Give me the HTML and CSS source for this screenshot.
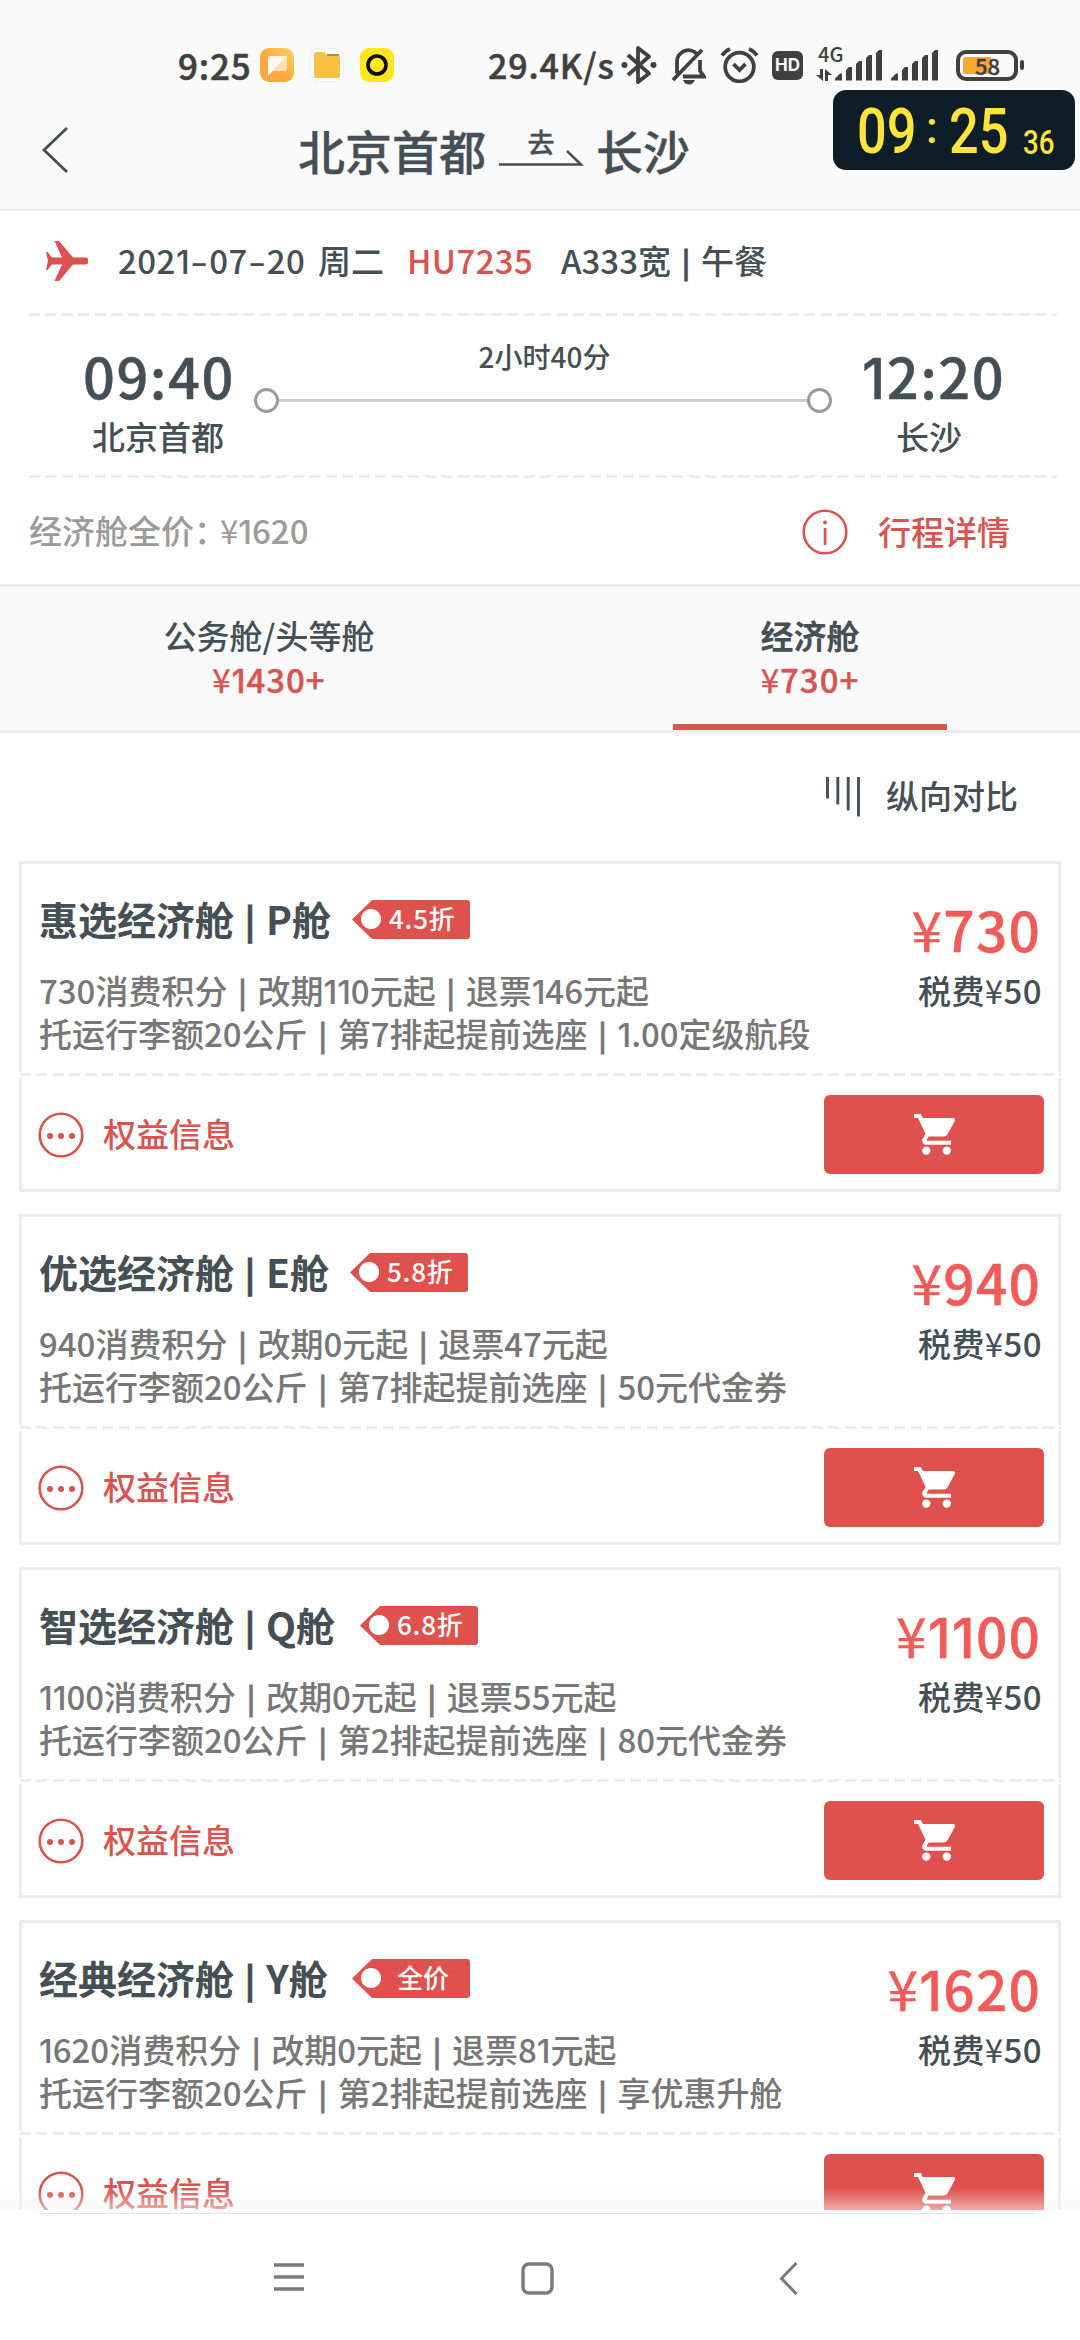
FILE: index.html
```html
<!DOCTYPE html>
<html lang="zh-CN">
<head>
<meta charset="utf-8">
<title>北京首都 - 长沙</title>
<link rel="stylesheet" href="styles.css">
</head>
<body>
<svg class="defs" width="0" height="0" aria-hidden="true">
  <symbol id="cart" viewBox="0 0 41 41">
    <path d="M0 0h6.8l2 4.1H39a2 2 0 0 1 1.8 3l-7.4 13.3a4.1 4.1 0 0 1-3.6 2.1H14.6l-1.9 3.4c-.2.5 0 .8.5.8H37v4.1H12.3a4.1 4.1 0 0 1-3.6-6.1l2.8-5L4.1 4.1H0z"/>
    <circle cx="12.3" cy="36.6" r="4.2"/><circle cx="32.8" cy="36.6" r="4.2"/>
  </symbol>
  <symbol id="more" viewBox="0 0 46 46">
    <circle cx="23" cy="23" r="21.3" fill="none" stroke="currentColor" stroke-width="2.6"/>
    <circle cx="12" cy="24" r="3"/><circle cx="23" cy="24" r="3"/><circle cx="34" cy="24" r="3"/>
  </symbol>
  <symbol id="signal" viewBox="0 0 48 31">
    <path d="M0 30.500v-2l5-5h2v7zM11 30.500V20l3-3h3v13.500zM21 30.500V14l3-3h3v19.500zM31 30.500V8l3-3h3v25.500zM41 30.500V3l3-3h3v30.500z"/>
  </symbol>
</svg>
<header class="top">
  <div class="status">
    <span class="st-time">9:25</span>
    <svg class="app app1" viewBox="0 0 34 34"><defs><linearGradient id="og" x1="0" y1="1" x2="1" y2="0"><stop offset=".4" stop-color="#ffa640"/><stop offset="1" stop-color="#ffd155"/></linearGradient></defs><rect width="34" height="34" rx="9" fill="url(#og)"/><path d="M27 8v13a2 2 0 0 1-2 2H13z" fill="#ffe0b4"/><path d="M8 10a2 2 0 0 1 2-2h17L8 28z" fill="#fffaf0"/></svg>
    <svg class="app app2" viewBox="0 0 34 34"><rect x=".5" y=".5" width="33" height="33" rx="8" fill="#fff" stroke="#eee"/><path d="M17 6h12v3H17z" fill="#b98a48"/><path d="M4 6q0-2 2-2h9l2 4h11q2 0 2 2v18q0 2-2 2H6q-2 0-2-2z" fill="#f8c045"/></svg>
    <svg class="app app3" viewBox="0 0 34 34"><rect width="34" height="34" rx="9" fill="#ffe51c"/><circle cx="17" cy="17" r="9" fill="none" stroke="#0a0a0a" stroke-width="3.600"/></svg>
    <span class="st-speed">29.4K/s</span>
    <svg class="bt" viewBox="0 0 36 40"><path d="M7 10l21 18.500-11 8.500V3l11 8.500L7 30" fill="none" stroke="currentColor" stroke-width="3.800" stroke-linejoin="round"/><circle cx="3.500" cy="20" r="3"/><circle cx="32.500" cy="20" r="3"/></svg>
    <svg class="bell" viewBox="0 0 35 38"><path d="M6 26.500V15a11.500 11.500 0 0 1 20-8M29 13v11l4 5.500H12M31 3L2 33" fill="none" stroke="currentColor" stroke-width="3.800"/><path d="M12 33h12q-2 4.500-6 4.500T12 33z"/></svg>
    <svg class="alarm" viewBox="0 0 39 36"><circle cx="19.500" cy="20" r="14.300" fill="none" stroke="currentColor" stroke-width="3.800"/><path d="M13.500 17l6 6 6-6M2 8.500Q5 4 10 2M37 8.500Q34 4 29 2" fill="none" stroke="currentColor" stroke-width="3.800"/></svg>
    <span class="hd">HD</span>
    <span class="net"><span class="gen">4G</span><svg class="updown" viewBox="0 0 16 12"><path d="M4 0h3v12L0 6h4zM9 12V0l7 6h-4v6z"/></svg></span>
    <svg class="sig sig1"><use href="#signal"/></svg>
    <svg class="sig sig2"><use href="#signal"/></svg>
    <span class="battery"><span class="level"></span><span class="pct">58</span></span><span class="nub"></span>
  </div>
  <div class="titlebar">
    <svg class="back" viewBox="0 0 28 46"><path d="M26 1L3 23l23 22" fill="none" stroke="currentColor" stroke-width="2.800"/></svg>
    <span class="from">北京首都</span>
    <span class="way"><span>去</span><svg viewBox="0 0 86 18"><path d="M1 15.500H83L69 2" fill="none" stroke="currentColor" stroke-width="2.500"/></svg></span>
    <span class="to">长沙</span>
  </div>
  <div class="clock"><span class="big">09</span><span class="colon">:</span><span class="big">25</span><span class="small">36</span></div>
</header>

<main class="content">
  <section class="flight">
    <svg class="plane" viewBox="0 0 42 40"><path d="M8.500 0h4.500L27 16.500h12a3.300 3.300 0 0 1 0 7H27L13 40H8.500L16 23.500H6L1.500 29H0l2-9-2-9h1.500L6 16.500h10z"/></svg>
    <span class="date">202<i>1</i><span class="hy">-</span>07<span class="hy">-</span>20</span><span class="week">周二</span><span class="no">HU7235</span><span class="craft">A333宽<span class="sep">|</span>午餐</span>
  </section>
  <div class="dash"></div>
  <section class="times">
    <div class="point"><b>09:40</b><span>北京首都</span></div>
    <div class="duration"><span>2小时40分</span><div class="track"></div></div>
    <div class="point arr"><b><i>1</i>2:20</b><span>长沙</span></div>
  </section>
  <div class="dash"></div>
  <section class="full">
    <span class="fullprice">经济舱全价：<em>¥</em><i>1</i>620</span>
    <svg class="info" viewBox="0 0 46 46"><circle cx="23" cy="23" r="21.300" fill="none" stroke="currentColor" stroke-width="2.600"/><circle cx="23" cy="13.500" r="1.900"/><path d="M21.700 19h2.700v17h-2.700z"/></svg>
    <span class="detail">行程详情</span>
  </section>
  <nav class="tabs">
    <div class="tab"><span>公务舱/头等舱</span><span class="tp"><em>¥</em><i>1</i>430+</span></div>
    <div class="tab on"><span>经济舱</span><span class="tp"><em>¥</em>730+</span></div>
  </nav>
  <div class="compare">
    <svg viewBox="0 0 34 40"><path d="M1.500 0v21.500M11.800 0v27.500M22.200 0v33.500M32.500 0v39.500" stroke="currentColor" stroke-width="2.900"/></svg>
    <span>纵向对比</span>
  </div>

  <article class="card">
    <div class="upper">
      <div class="name"><h2 class="n1">惠选经济舱<span class="sep">|</span>P舱</h2><span class="tag">4.5折</span></div>
      <div class="price"><em>¥</em>730</div>
      <div class="rules"><p>730消费积分<span class="sep">|</span>改期<i>11</i>0元起<span class="sep">|</span>退票<i>1</i>46元起</p><p>托运行李额20公斤<span class="sep">|</span>第7排起提前选座<span class="sep">|</span><i>1</i>.00定级航段</p></div>
      <div class="tax">税费<em>¥</em>50</div>
    </div>
    <div class="perf"></div>
    <div class="lower"><svg class="more"><use href="#more"/></svg><span class="rights">权益信息</span><span class="buy"><svg><use href="#cart"/></svg></span></div>
  </article>

  <article class="card">
    <div class="upper">
      <div class="name"><h2 class="n2">优选经济舱<span class="sep">|</span>E舱</h2><span class="tag">5.8折</span></div>
      <div class="price"><em>¥</em>940</div>
      <div class="rules"><p>940消费积分<span class="sep">|</span>改期0元起<span class="sep">|</span>退票47元起</p><p>托运行李额20公斤<span class="sep">|</span>第7排起提前选座<span class="sep">|</span>50元代金券</p></div>
      <div class="tax">税费<em>¥</em>50</div>
    </div>
    <div class="perf"></div>
    <div class="lower"><svg class="more"><use href="#more"/></svg><span class="rights">权益信息</span><span class="buy"><svg><use href="#cart"/></svg></span></div>
  </article>

  <article class="card">
    <div class="upper">
      <div class="name"><h2 class="n3">智选经济舱<span class="sep">|</span>Q舱</h2><span class="tag">6.8折</span></div>
      <div class="price"><em>¥</em><i>11</i>00</div>
      <div class="rules"><p><i>11</i>00消费积分<span class="sep">|</span>改期0元起<span class="sep">|</span>退票55元起</p><p>托运行李额20公斤<span class="sep">|</span>第2排起提前选座<span class="sep">|</span>80元代金券</p></div>
      <div class="tax">税费<em>¥</em>50</div>
    </div>
    <div class="perf"></div>
    <div class="lower"><svg class="more"><use href="#more"/></svg><span class="rights">权益信息</span><span class="buy"><svg><use href="#cart"/></svg></span></div>
  </article>

  <article class="card">
    <div class="upper">
      <div class="name"><h2 class="n4">经典经济舱<span class="sep">|</span>Y舱</h2><span class="tag full-fare">全价</span></div>
      <div class="price"><em>¥</em><i>1</i>620</div>
      <div class="rules"><p><i>1</i>620消费积分<span class="sep">|</span>改期0元起<span class="sep">|</span>退票8<i>1</i>元起</p><p>托运行李额20公斤<span class="sep">|</span>第2排起提前选座<span class="sep">|</span>享优惠升舱</p></div>
      <div class="tax">税费<em>¥</em>50</div>
    </div>
    <div class="perf"></div>
    <div class="lower"><svg class="more"><use href="#more"/></svg><span class="rights">权益信息</span><span class="buy"><svg><use href="#cart"/></svg></span></div>
  </article>
  <div class="fade"></div>
</main>

<footer class="navbar">
  <svg class="nmenu" viewBox="0 0 30 30"><path d="M0 3h30M0 15h30M0 27h30" stroke="currentColor" stroke-width="3.400"/></svg>
  <svg class="nhome" viewBox="0 0 33 33"><rect x="2" y="2" width="29" height="29" rx="6" fill="none" stroke="currentColor" stroke-width="3.400"/></svg>
  <svg class="nback" viewBox="0 0 19 33"><path d="M17.500 1L2.500 16.500l15 15.500" fill="none" stroke="currentColor" stroke-width="3"/></svg>
</footer>
</body>
</html>
```
FILE: styles.css
```css
*, *::before, *::after { box-sizing: border-box; }
html, body { margin: 0; }
body {
  width: 1080px; height: 2340px; overflow: hidden;
  display: flex; flex-direction: column;
  background: #fefefe; color: #454f56;
  font: 500 33px/1 "Noto Sans CJK SC", sans-serif;
  white-space: nowrap;
}
svg { display: block; fill: currentColor; flex: none; }
.defs { position: absolute; }
em, i { font-style: normal; }
em { font-weight: 400; }
/* the figure 1 is narrow and has no foot */
i { font-family: Inter, sans-serif; line-height: 1; }
span { flex: none; }

.top { position: relative; height: 211px; flex: none; background: #fafafa; border-bottom: 2px solid #ececec; }
.status { display: flex; align-items: flex-start; height: 90px; padding: 45px 0 0 178px; color: #404040; line-height: 40px; }
.st-time { width: 82px; font-size: 35px; letter-spacing: .8px; -webkit-text-stroke: .5px; }
.app { width: 34px; height: 34px; margin-top: 3px; }
.app2, .app3 { margin-left: 16px; }
.st-speed { width: 132px; margin-left: 94px; font-size: 34px; letter-spacing: .9px; -webkit-text-stroke: .5px; }
.bt { width: 36px; height: 40px; margin-left: 1px; margin-right: -1px; }
.bell { width: 35px; height: 38px; margin: 2px 0 0 15px; }
.alarm { width: 39px; height: 36px; margin: 2px 0 0 14px; }
.hd { width: 31px; height: 29px; margin: 6px 0 0 13px; border-radius: 6px; background: #404040; color: #fafafa; font: 700 17px/29px Inter, sans-serif; text-align: center; }
.net { width: 30px; margin-left: 13px; }
.gen { display: block; height: 24px; padding-left: 2px; font-size: 20px; line-height: 17px; }
.updown { width: 16px; height: 12px; }
.sig { width: 48px; height: 31px; margin-top: 5px; }
.sig1 { margin-left: -11px; }
.sig2 { margin-left: 8px; }
.battery { display: flex; align-items: center; width: 62px; height: 31px; margin: 5px 0 0 17px; padding: 2px 3px; border: 4px solid #404040; border-radius: 10px; }
.level { width: 28px; height: 17px; border-radius: 3px 0 0 3px; background: #f5ab31; }
.pct { margin-left: -16px; font-size: 22px; line-height: 12px; margin-top: -2px; -webkit-text-stroke: .4px; }
.nub { width: 4px; height: 10px; margin: 15px 0 0 2px; border-radius: 2px; background: #404040; }

.titlebar { display: flex; align-items: center; height: 119px; padding-left: 41px; font-size: 47px; line-height: 60px; -webkit-text-stroke: .3px; }
.back { width: 28px; height: 46px; margin-top: 1px; }
.from { width: 200px; margin-left: 229px; }
.way { width: 86px; margin-right: 12px; font-size: 27px; }
.way span { display: block; height: 24px; line-height: 20px; text-align: center; }
.way svg { width: 86px; height: 18px; margin-top: -7px; }
.clock {
  position: absolute; left: 833px; top: 90px; width: 242px; height: 80px;
  display: flex; border-radius: 13px; background: #0f1d29; color: #ffe43c;
  padding-left: 24px; font: 500 63px/83px Roboto, sans-serif;
}
.big { width: 76px; transform: scaleX(.83); transform-origin: 0 50%; }
.colon { width: 17px; margin-left: -7px; margin-right: 6px; font-size: 44px; line-height: 77px; }
.small { font-size: 33px; line-height: 105px; margin-left: -2px; transform: scaleX(.84); transform-origin: 0 50%; }

.content { position: relative; height: 1999px; flex: none; overflow: hidden; }
.flight { display: flex; align-items: center; height: 101px; padding: 0 0 3px 46px; line-height: 40px; }
.plane { width: 42px; height: 40px; margin: 1px 30px 0 0; color: #df514c; }
.date { width: 200px; letter-spacing: .5px; }
.hy { display: inline-block; width: 19px; text-align: center; transform: scaleX(1.5); }
.week { width: 89px; }
.no { width: 154px; color: #d9534f; letter-spacing: .4px; }
.sep { display: inline-block; width: 30px; text-align: center; font-size: .86em; line-height: 1; position: relative; top: -1px; -webkit-text-stroke: 1.2px; }
.dash, .perf {
  height: 4px; background: repeating-linear-gradient(90deg, #ececec 0 11px, transparent 11px 16.500px);
}
.dash { margin: 1px 23px 0 29px; height: 3px; }
.times { display: flex; height: 158px; padding: 24px 0 0 83px; }
.point { width: 150px; text-align: center; }
.point b { display: block; height: 76px; font-size: 56px; font-weight: 500; line-height: 69px; letter-spacing: 1.5px; -webkit-text-stroke: .4px; }
.point span { display: block; line-height: 40px; }
.arr { width: 140px; margin-left: 27px; }
.arr b { padding-left: 3px; }
.duration { width: 578px; margin-left: 21px; text-align: center; font-size: 28px; line-height: 34px; }
.duration span { display: block; padding-left: 3px; margin-top: -1px; }
.track {
  display: flex; align-items: center; justify-content: space-between; height: 26px; margin-top: 14px;
  background: linear-gradient(#ccc, #ccc) 24px 12px / 529px 3px no-repeat;
}
.track::before, .track::after { content: ""; flex: none; width: 25px; height: 25px; border: 3px solid #9b9b9b; border-radius: 50%; }
.full { display: flex; align-items: center; height: 106px; padding: 0 0 0 29px; color: #d9534f; }
.fullprice { width: 773px; color: #9b9b9b; }
.fullprice em { margin-left: -7px; }
.info { width: 46px; height: 46px; margin: 1px 29px 0 0; }
.detail { padding-left: 1px; }
.tabs { display: flex; height: 149px; border: solid #ececec; border-width: 3px 0; background: #fafafa; }
.tab { width: 538px; padding-top: 26px; text-align: center; line-height: 44px; }
.tab span { display: block; }
.tab .tp { color: #d9534f; letter-spacing: 1px; -webkit-text-stroke: .4px; }
.on { width: 274px; margin-left: 135px; border-bottom: 6px solid #df514c; font-weight: 700; }
.on .tp { font-weight: 500; }
.compare { display: flex; height: 128px; padding: 44px 0 0 826px; line-height: 36px; }
.compare svg { width: 34px; height: 40px; margin-right: 26px; }

.card { width: 1042px; height: 331px; margin: 0 0 22px 19px; }
.upper { display: grid; grid-template-columns: 1fr auto; align-content: start; height: 211px; padding: 31px 17px 0; border: 3px solid #ececec; border-bottom: 0; }
.name { display: flex; height: 74px; padding-top: 5px; }
.name h2 { margin: -2px 0 0; font-size: 39px; font-weight: 700; line-height: 40px; }
.n1, .n4 { width: 313px; }
.n2 { width: 311px; }
.n3 { width: 321px; }
.name .sep { width: 32px; }
.tag {
  width: 118px; height: 39px; padding-left: 37px; border-radius: 0 3px 3px 0;
  background: radial-gradient(circle at 19px 19px, #fff 9.500px, #df514c 10.500px);
  clip-path: polygon(0 50%, 20px 0, 100% 0, 100% 100%, 20px 100%);
  color: #fff; font-size: 26px; line-height: 36px; letter-spacing: .8px;
}
.full-fare { padding-left: 45px; letter-spacing: 0; }
.price { height: 74px; font-size: 55px; line-height: 67px; color: #f05b57; text-align: right; letter-spacing: 1.2px; -webkit-text-stroke: .4px; }
.rules { color: #777; line-height: 43px; }
.rules p { margin: 0; height: 43px; }
.tax { margin-right: -1px; line-height: 43px; text-align: right; letter-spacing: .4px; }
.perf { height: 6px; margin-left: 1px; background-size: 100% 3px; background-position: 0 1px; background-repeat: no-repeat; }
.lower { display: flex; height: 114px; padding-left: 16px; border: 3px solid #ececec; border-top: 0; line-height: 110px; color: #d9534f; }
.more { width: 46px; height: 46px; margin: 34px 19px 0 0; }
.rights { width: 721px; }
.lower .buy { display: flex; align-items: center; justify-content: center; width: 220px; height: 79px; margin: 17px 0 0; border-radius: 6px; background: #df514c; color: #fff; }
.buy svg { width: 41px; height: 41px; }
.fade { position: absolute; left: 0; right: 0; bottom: 0; height: 22px; background: linear-gradient(rgba(245,245,245,0), rgba(245,245,245,.55)); }

.navbar { display: flex; height: 130px; padding: 52px 0 0 274px; color: #7b7b7b; background: linear-gradient(#e4e4e4, #e4e4e4) 40px 3px / 994px 1px no-repeat #fff; }
.nmenu { width: 30px; height: 30px; margin-right: 217px; }
.nhome { width: 33px; height: 33px; margin-right: 225px; }
.nback { width: 19px; height: 33px; }
```
